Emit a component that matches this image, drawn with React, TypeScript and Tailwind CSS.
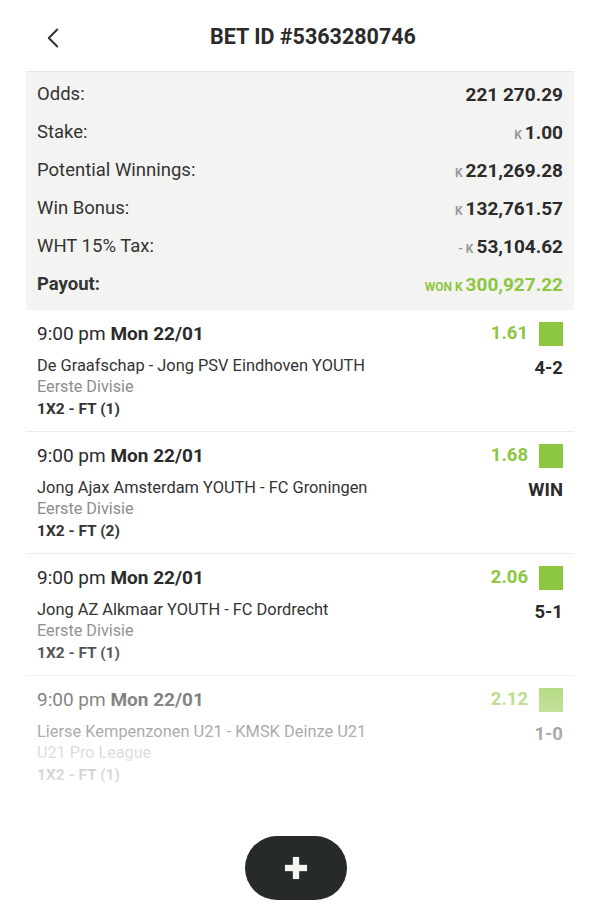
import { ChevronLeft, Plus } from 'lucide-react'

interface Bet {
  time: string
  day: string
  match: string
  league: string
  market: string
  odds: string
  result: string
}

const bets: Bet[] = [
  { time: '9:00 pm', day: 'Mon 22/01', match: 'De Graafschap - Jong PSV Eindhoven YOUTH', league: 'Eerste Divisie', market: '1X2 - FT (1)', odds: '1.61', result: '4-2' },
  { time: '9:00 pm', day: 'Mon 22/01', match: 'Jong Ajax Amsterdam YOUTH - FC Groningen', league: 'Eerste Divisie', market: '1X2 - FT (2)', odds: '1.68', result: 'WIN' },
  { time: '9:00 pm', day: 'Mon 22/01', match: 'Jong AZ Alkmaar YOUTH - FC Dordrecht', league: 'Eerste Divisie', market: '1X2 - FT (1)', odds: '2.06', result: '5-1' },
  { time: '9:00 pm', day: 'Mon 22/01', match: 'Lierse Kempenzonen U21 - KMSK Deinze U21', league: 'U21 Pro League', market: '1X2 - FT (1)', odds: '2.12', result: '1-0' },
  { time: '9:00 pm', day: 'Mon 22/01', match: 'Lommel SK U21 - Club NXT', league: 'U21 Pro League', market: '1X2 - FT (1)', odds: '1.95', result: '2-0' },
]

function Kw() {
  return <span className="text-[12px] font-bold text-[#9a9a9a] mr-[3px]">K</span>
}

function SummaryRow({ label, children, bold }: { label: string; children: React.ReactNode; bold?: boolean }) {
  return (
    <div className="h-[38px] flex items-center justify-between">
      <span className={`text-[18.5px] text-[#333] ${bold ? 'font-bold' : ''}`}>{label}</span>
      <span className="text-[19px] font-bold text-[#2b2b2b] flex items-baseline">{children}</span>
    </div>
  )
}

function BetRow({ bet }: { bet: Bet }) {
  return (
    <div className="h-[122px] border-b border-[#ececec] px-[11px] pt-[12px]">
      <div className="flex items-center justify-between h-[24px]">
        <div className="text-[19px] text-[#2b2b2b]">
          {bet.time} <span className="font-bold">{bet.day}</span>
        </div>
        <div className="flex items-center gap-[11px]">
          <span className="text-[18.5px] font-bold text-[#8dc63f]">{bet.odds}</span>
          <span className="w-[24px] h-[24px] bg-[#8dc63f]" />
        </div>
      </div>
      <div className="flex justify-between items-start mt-[10px]">
        <div>
          <div className="text-[16.4px] text-[#333] leading-[20px]">{bet.match}</div>
          <div className="text-[16.2px] text-[#8c8c8c] leading-[22px]">{bet.league}</div>
          <div className="text-[15.5px] font-bold text-[#333] leading-[22px]">{bet.market}</div>
        </div>
        <div className="text-[18.5px] font-bold text-[#2b2b2b] leading-[22px] pt-[1px]">{bet.result}</div>
      </div>
    </div>
  )
}

export default function App() {
  return (
    <div className="relative w-[600px] h-[920px] overflow-hidden bg-white" style={{ fontFamily: 'Roboto, "Open Sans", sans-serif' }}>
      <div className="h-[71px] flex items-center pl-[36px] pr-[38px] pt-[4px]">
        <ChevronLeft className="w-[34px] h-[34px] text-[#333]" strokeWidth={1.4} />
        <h1 className="flex-1 text-center text-[21.5px] font-bold text-[#2b2b2b] pr-[6px]">BET ID #5363280746</h1>
      </div>

      <div className="mx-[26px]">
        <div className="bg-[#f3f3f1] border-t border-[#e6e6e3] px-[11px] pt-[4px] pb-[6px]">
          <SummaryRow label="Odds:">221 270.29</SummaryRow>
          <SummaryRow label="Stake:"><Kw />1.00</SummaryRow>
          <SummaryRow label="Potential Winnings:"><Kw />221,269.28</SummaryRow>
          <SummaryRow label="Win Bonus:"><Kw />132,761.57</SummaryRow>
          <SummaryRow label="WHT 15% Tax:">
            <span className="text-[12px] font-bold text-[#9a9a9a] mr-[3px]">-</span>
            <Kw />53,104.62
          </SummaryRow>
          <SummaryRow label="Payout:" bold>
            <span className="text-[12px] font-bold text-[#8dc63f] mr-[3px]">WON K</span>
            <span className="text-[#8dc63f]">300,927.22</span>
          </SummaryRow>
        </div>

        <div>
          {bets.map((b, i) => (
            <BetRow key={i} bet={b} />
          ))}
        </div>
      </div>

      <div className="absolute left-0 right-0 top-[620px] h-[192px] bg-linear-to-b from-white/0 to-white" />
      <div className="absolute left-0 right-0 top-[811px] bottom-0 bg-white" />

      <button className="absolute left-[245px] top-[836px] w-[102px] h-[64px] rounded-full bg-[#262a2b] flex items-center justify-center">
        <Plus className="w-[38px] h-[38px] text-[#f4f4f0]" strokeWidth={4} strokeLinecap="butt" />
      </button>
    </div>
  )
}
